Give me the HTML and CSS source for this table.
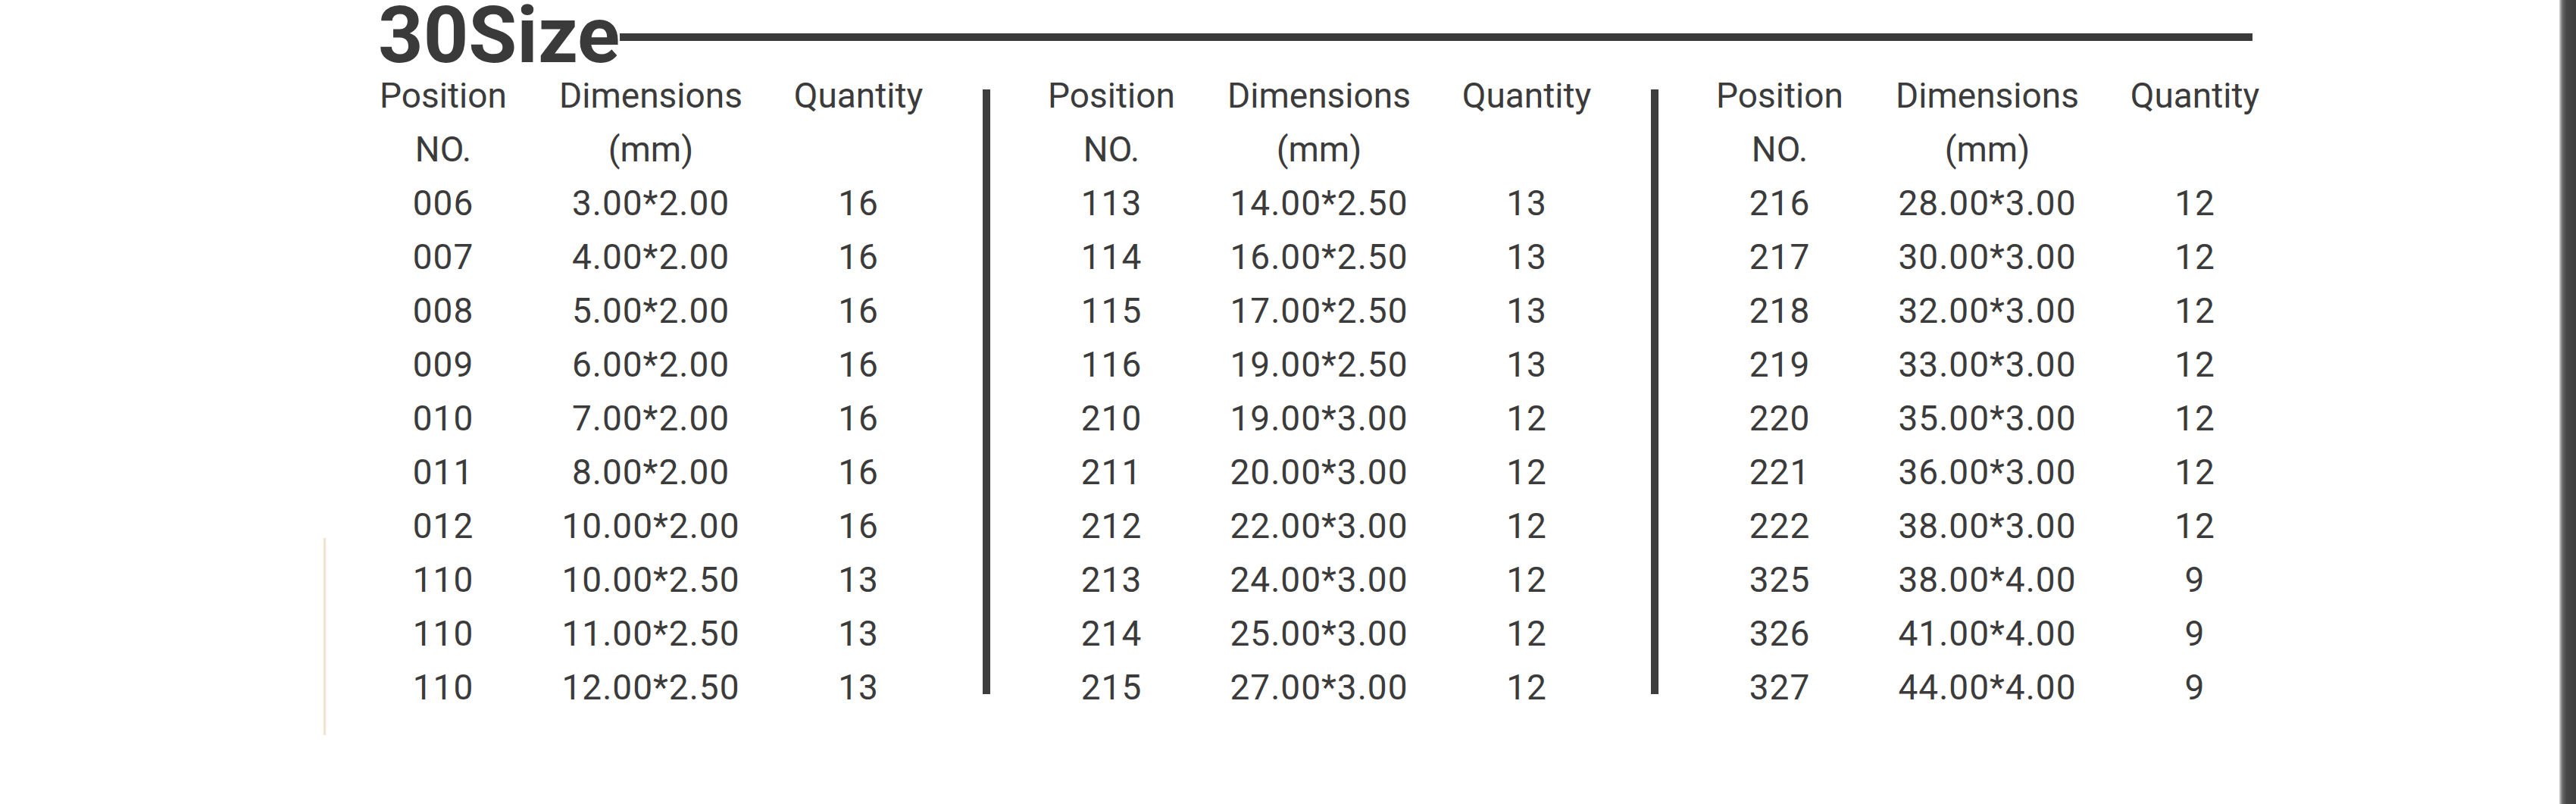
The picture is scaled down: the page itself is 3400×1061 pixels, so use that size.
FILE: index.html
```html
<!DOCTYPE html>
<html lang="en">
<head>
<meta charset="utf-8">
<title>30Size</title>
<link rel="stylesheet" href="styles.css">
</head>
<body>
<div class="sheet">
  <main class="page">
    <header class="title-row">
      <h1 class="title">30Size</h1>
      <div class="rule"></div>
    </header>
    <section class="table">
      <div class="group">
        <span>Position</span><span>Dimensions</span><span>Quantity</span>
        <span>NO.</span><span>(mm)</span><span></span>
        <span>006</span><span>3.00*2.00</span><span>16</span>
        <span>007</span><span>4.00*2.00</span><span>16</span>
        <span>008</span><span>5.00*2.00</span><span>16</span>
        <span>009</span><span>6.00*2.00</span><span>16</span>
        <span>010</span><span>7.00*2.00</span><span>16</span>
        <span>011</span><span>8.00*2.00</span><span>16</span>
        <span>012</span><span>10.00*2.00</span><span>16</span>
        <span>110</span><span>10.00*2.50</span><span>13</span>
        <span>110</span><span>11.00*2.50</span><span>13</span>
        <span>110</span><span>12.00*2.50</span><span>13</span>
      </div>
      <div class="divider"></div>
      <div class="group">
        <span>Position</span><span>Dimensions</span><span>Quantity</span>
        <span>NO.</span><span>(mm)</span><span></span>
        <span>113</span><span>14.00*2.50</span><span>13</span>
        <span>114</span><span>16.00*2.50</span><span>13</span>
        <span>115</span><span>17.00*2.50</span><span>13</span>
        <span>116</span><span>19.00*2.50</span><span>13</span>
        <span>210</span><span>19.00*3.00</span><span>12</span>
        <span>211</span><span>20.00*3.00</span><span>12</span>
        <span>212</span><span>22.00*3.00</span><span>12</span>
        <span>213</span><span>24.00*3.00</span><span>12</span>
        <span>214</span><span>25.00*3.00</span><span>12</span>
        <span>215</span><span>27.00*3.00</span><span>12</span>
      </div>
      <div class="divider"></div>
      <div class="group">
        <span>Position</span><span>Dimensions</span><span>Quantity</span>
        <span>NO.</span><span>(mm)</span><span></span>
        <span>216</span><span>28.00*3.00</span><span>12</span>
        <span>217</span><span>30.00*3.00</span><span>12</span>
        <span>218</span><span>32.00*3.00</span><span>12</span>
        <span>219</span><span>33.00*3.00</span><span>12</span>
        <span>220</span><span>35.00*3.00</span><span>12</span>
        <span>221</span><span>36.00*3.00</span><span>12</span>
        <span>222</span><span>38.00*3.00</span><span>12</span>
        <span>325</span><span>38.00*4.00</span><span>9</span>
        <span>326</span><span>41.00*4.00</span><span>9</span>
        <span>327</span><span>44.00*4.00</span><span>9</span>
      </div>
    </section>
  </main>
  <div class="edge"></div>
</div>
</body>
</html>
```

FILE: styles.css
```css
html, body {
  margin: 0;
  padding: 0;
}

body {
  background: #ffffff;
  font-family: Roboto, "Liberation Sans", sans-serif;
  color: #3b3b3b;
}

.sheet {
  display: flex;
  width: 3400px;
  height: 1061px;
  overflow: hidden;
}

.page {
  flex: 1;
  box-sizing: border-box;
  padding: 3px 0 0 448px;
  background-color: #ffffff;
  background-image: linear-gradient(to right, rgba(236, 217, 195, 0), #f0dfcb 40%, #f0dfcb 60%, rgba(236, 217, 195, 0));
  background-size: 5px 260px;
  background-position: 426px 710px;
  background-repeat: no-repeat;
}

.edge {
  width: 22px;
  background: linear-gradient(to right, #d8d8d8 0, #6a6a6a 4px, #474747 9px, #3e3e3e 100%);
}

.title-row {
  display: flex;
  align-items: flex-start;
  box-sizing: border-box;
  width: 2525px;
  padding-left: 51px;
}

.title {
  margin: 0;
  font-size: 104px;
  font-weight: 700;
  line-height: 88px;
  color: #3a3a3a;
}

.rule {
  flex: 1;
  height: 10px;
  margin-top: 41px;
  background: #3a3a3a;
}

.table {
  display: flex;
  align-items: stretch;
}

.group {
  display: grid;
  grid-template-columns: repeat(3, 274px);
  grid-auto-rows: 71px;
  font-size: 46px;
  line-height: 71px;
  text-align: center;
  white-space: nowrap;
}

.group span:nth-child(n+7) {
  letter-spacing: 1px;
}

.divider {
  width: 10px;
  margin: 27px 23px 27px 27px;
  background: #3d3d3d;
}
```
